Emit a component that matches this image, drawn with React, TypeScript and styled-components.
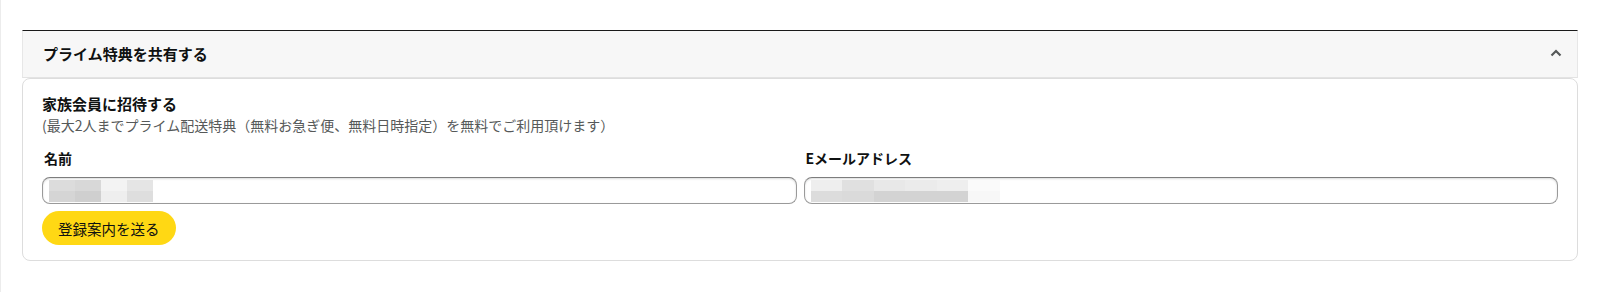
import styled, { createGlobalStyle } from 'styled-components'

const GlobalStyle = createGlobalStyle`
  html, body {
    margin: 0;
    padding: 0;
    background: #ffffff;
  }
  body {
    font-family: "Noto Sans CJK JP", "Noto Sans", "Liberation Sans", sans-serif;
    color: #0f1111;
  }
  * {
    box-sizing: border-box;
  }
`

const Page = styled.div`
  min-height: 292px;
  border-left: 1px solid #ececec;
  padding: 30px 22px 0 21px;
`

const Header = styled.div`
  height: 48px;
  display: flex;
  align-items: center;
  justify-content: space-between;
  padding: 0 15px 0 20px;
  background-color: #f7f7f7;
  border-top: 1px solid #1a1a1a;
  border-left: 1px solid #e7e7e7;
  border-right: 1px solid #e7e7e7;
  border-bottom: 1px solid #e3e3e3;
`

const HeaderTitle = styled.div`
  font-size: 15px;
  font-weight: 700;
  line-height: 20px;
  color: #0f1111;
`

const Chevron = styled.svg`
  width: 12px;
  height: 8px;
  margin-top: -2px;
`

const Card = styled.div`
  border: 1px solid #dddddd;
  border-radius: 8px;
  padding: 15px 19px 15px;
  display: flex;
  flex-direction: column;
`

const SectionTitle = styled.div`
  font-size: 15px;
  font-weight: 700;
  line-height: 20px;
`

const Note = styled.div`
  font-size: 14px;
  line-height: 20px;
  margin-top: 1px;
  color: #565959;
`

const Fields = styled.div`
  display: grid;
  grid-template-columns: 1fr 1fr;
  column-gap: 7px;
  margin-top: 13px;
`

const Field = styled.div`
  display: flex;
  flex-direction: column;
`

const Label = styled.div`
  font-size: 14px;
  font-weight: 700;
  line-height: 20px;
  padding-left: 2px;
`

const InputBox = styled.div`
  margin-top: 9px;
  height: 27px;
  border: 1px solid #9a9a9a;
  border-top-color: #7d7d7d;
  border-radius: 8px;
  box-shadow: 0 1px 2px rgba(15, 17, 17, 0.15) inset;
  padding: 2px 6px;
  display: flex;
  align-items: flex-start;
  background: #ffffff;
`

const Mosaic = styled.div<{ $cell: number }>`
  display: grid;
  grid-auto-flow: column;
  grid-template-rows: 11px 11px;
  grid-auto-columns: ${(p) => p.$cell}px;
`

const Cell = styled.div<{ $c: string }>`
  background-color: ${(p) => p.$c};
`

const SendButton = styled.button`
  align-self: flex-start;
  margin-top: 7px;
  height: 34px;
  padding: 0 16px;
  border: none;
  border-radius: 100px;
  background-color: #ffd814;
  font-family: inherit;
  font-size: 14.5px;
  color: #0f1111;
  cursor: pointer;
`

const nameCells = [
  ['#dcdcdc', '#d5d5d5'],
  ['#d8d8d8', '#cfcfcf'],
  ['#f3f3f3', '#eeeeee'],
  ['#e5e5e5', '#dedede'],
]

const mailCells = [
  ['#eeeeee', '#dcdcdc'],
  ['#e0e0e0', '#dadada'],
  ['#e8e8e8', '#d3d3d3'],
  ['#ebebeb', '#d3d3d3'],
  ['#eeeeee', '#d3d3d3'],
  ['#fafafa', '#f7f7f7'],
]

function Blur({ cells, size }: { cells: string[][]; size: number }) {
  return (
    <Mosaic $cell={size}>
      {cells.map((col, i) =>
        col.map((c, j) => <Cell key={`${i}-${j}`} $c={c} />)
      )}
    </Mosaic>
  )
}

export default function App() {
  return (
    <>
      <GlobalStyle />
      <Page>
        <Header>
          <HeaderTitle>プライム特典を共有する</HeaderTitle>
          <Chevron viewBox="0 0 12 8">
            <polyline points="1.5,6.5 6,2 10.5,6.5" fill="none" stroke="#565959" strokeWidth="2.2" />
          </Chevron>
        </Header>
        <Card>
          <SectionTitle>家族会員に招待する</SectionTitle>
          <Note>(最大2人までプライム配送特典（無料お急ぎ便、無料日時指定）を無料でご利用頂けます）</Note>
          <Fields>
            <Field>
              <Label>名前</Label>
              <InputBox>
                <Blur cells={nameCells} size={26} />
              </InputBox>
            </Field>
            <Field>
              <Label>Eメールアドレス</Label>
              <InputBox>
                <Blur cells={mailCells} size={31.5} />
              </InputBox>
            </Field>
          </Fields>
          <SendButton>登録案内を送る</SendButton>
        </Card>
      </Page>
    </>
  )
}
